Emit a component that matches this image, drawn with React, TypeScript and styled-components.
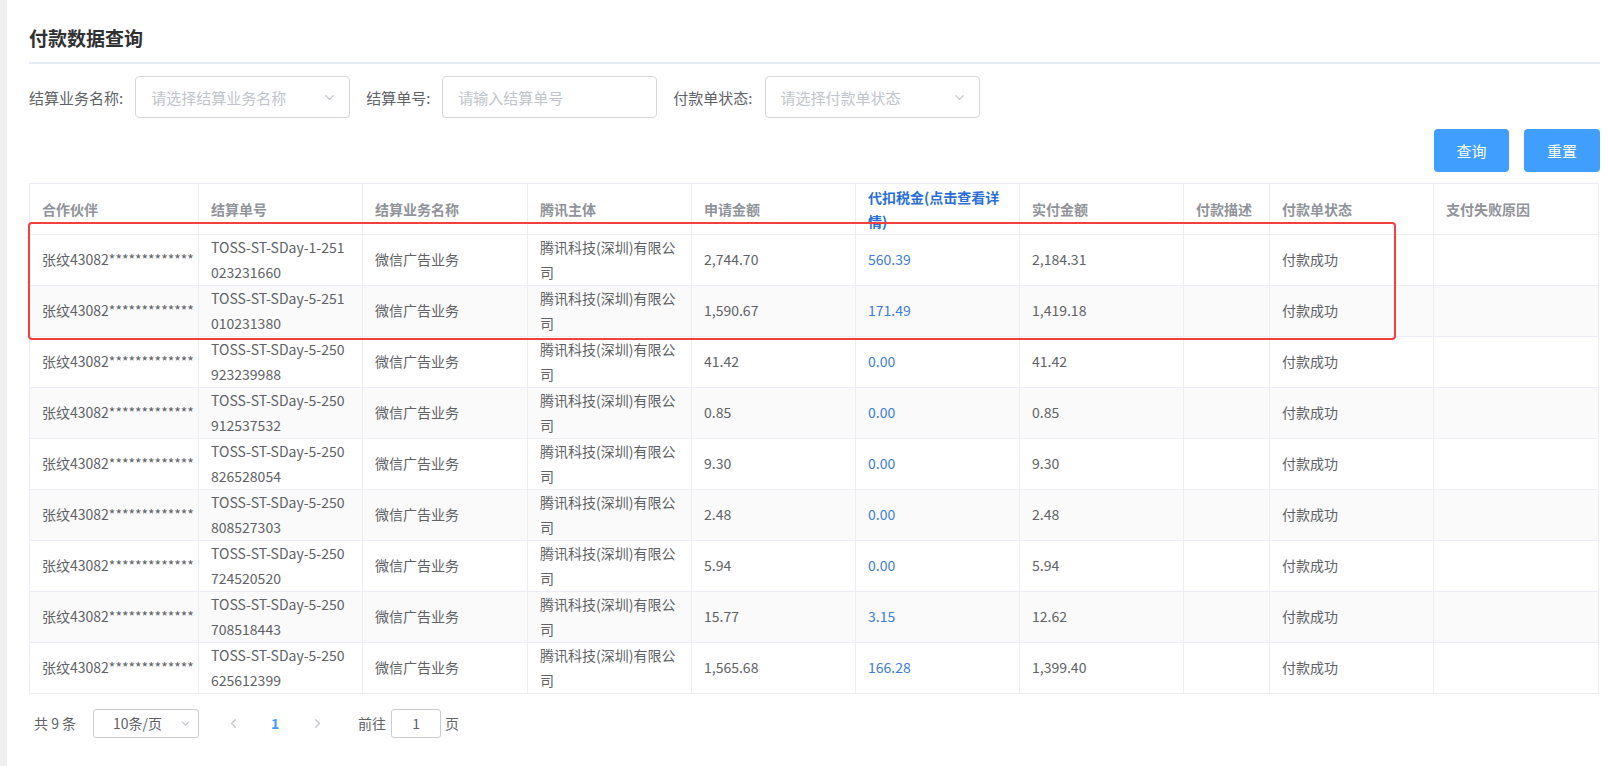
import React from 'react';
import styled, {createGlobalStyle} from 'styled-components';
import {ChevronDown, ChevronLeft, ChevronRight} from 'lucide-react';

const GlobalStyle = createGlobalStyle`
  body {
    margin: 0;
    background: #fff;
    font-family: "Noto Sans CJK SC", "Noto Sans", sans-serif;
  }
`;

const Page = styled.div`
  display: flex;
  min-height: 100vh;
`;

const SideStrip = styled.div`
  width: 7px;
  flex-shrink: 0;
  background: #efefef;
`;

const Main = styled.div`
  flex: 1;
  padding: 25px 8px 0 22px;
  min-width: 0;
`;

const Title = styled.h2`
  margin: 0;
  height: 26px;
  line-height: 26px;
  font-size: 19px;
  font-weight: 700;
  color: #303133;
`;

const Divider = styled.div`
  margin-top: 11px;
  height: 2px;
  background: #e4edf7;
`;

const FilterRow = styled.div`
  margin-top: 12px;
  height: 42px;
  display: flex;
  align-items: center;
`;

const FormItem = styled.div`
  display: flex;
  align-items: center;
  margin-right: 16px;
`;

const Label = styled.span`
  font-size: 15px;
  color: #606266;
  margin-right: 12px;
  white-space: nowrap;
`;

const Control = styled.div`
  width: 215px;
  height: 42px;
  box-sizing: border-box;
  border: 1px solid #d4d7de;
  border-radius: 4px;
  padding: 0 12px 0 15px;
  display: flex;
  align-items: center;
  justify-content: space-between;
  font-size: 15px;
  color: #c0c4cc;
`;

const ButtonRow = styled.div`
  margin-top: 11px;
  display: flex;
  justify-content: flex-end;
  gap: 15px;
`;

const Button = styled.button<{$w: number}>`
  width: ${p => p.$w}px;
  height: 43px;
  border: none;
  border-radius: 4px;
  background: #409eff;
  color: #fff;
  font-family: inherit;
  font-size: 15px;
`;

const TableWrap = styled.div`
  position: relative;
  margin-top: 11px;
`;

const Table = styled.table`
  width: 1569px;
  table-layout: fixed;
  border-collapse: collapse;
`;

const Th = styled.th<{$link?: boolean}>`
  height: 49.5px;
  padding: 0 12px;
  border: 1px solid #ebeef5;
  text-align: left;
  vertical-align: middle;
  font-size: 14px;
  line-height: 24px;
  font-weight: 700;
  color: ${p => (p.$link ? '#2a6fd6' : '#909399')};
  word-break: break-all;
`;

const Row = styled.tr<{$striped: boolean}>`
  background: ${p => (p.$striped ? '#fafafa' : '#fff')};
`;

const Td = styled.td<{$link?: boolean; $nowrap?: boolean}>`
  height: 49.8px;
  padding: 0 12px;
  border: 1px solid #ebeef5;
  vertical-align: middle;
  font-size: 14px;
  line-height: 25px;
  color: ${p => (p.$link ? '#3d7ddb' : '#606266')};
  word-break: break-all;
  white-space: ${p => (p.$nowrap ? 'nowrap' : 'normal')};
  overflow: hidden;
`;

const Highlight = styled.div`
  position: absolute;
  top: 39px;
  left: -1px;
  width: 1368px;
  height: 118px;
  box-sizing: border-box;
  border: 2px solid #f43f3f;
  border-radius: 4px;
  pointer-events: none;
`;

const Pagination = styled.div`
  margin-top: 15px;
  height: 29px;
  display: flex;
  align-items: center;
  font-size: 14px;
  color: #606266;
`;

const Total = styled.span`
  margin-left: 5px;
  margin-right: 17px;
  white-space: pre;
`;

const SizeSelect = styled.div`
  width: 106px;
  height: 29px;
  box-sizing: border-box;
  border: 1px solid #c9ccd3;
  border-radius: 3px;
  padding: 0 6px 0 19px;
  display: flex;
  align-items: center;
  justify-content: space-between;
  color: #606266;
`;

const PagerBtn = styled.div<{$active?: boolean}>`
  width: 42px;
  height: 29px;
  display: flex;
  align-items: center;
  justify-content: center;
  color: ${p => (p.$active ? '#409eff' : '#c0c4cc')};
  font-weight: ${p => (p.$active ? 700 : 400)};
`;

const Pager = styled.div`
  display: flex;
  margin-left: 13px;
`;

const Jump = styled.span`
  margin-left: 20px;
`;

const JumpInput = styled.div`
  width: 50px;
  height: 29px;
  box-sizing: border-box;
  margin: 0 4px 0 5px;
  border: 1px solid #c9ccd3;
  border-radius: 3px;
  display: flex;
  align-items: center;
  justify-content: center;
  color: #606266;
`;

const columns = [
  {title: '合作伙伴', width: 169},
  {title: '结算单号', width: 164},
  {title: '结算业务名称', width: 165},
  {title: '腾讯主体', width: 164},
  {title: '申请金额', width: 164},
  {title: '代扣税金(点击查看详情)', width: 164, link: true},
  {title: '实付金额', width: 164},
  {title: '付款描述', width: 86},
  {title: '付款单状态', width: 164},
  {title: '支付失败原因', width: 165},
];

const rows = [
  {no: 'TOSS-ST-SDay-1-251023231660', apply: '2,744.70', tax: '560.39', paid: '2,184.31'},
  {no: 'TOSS-ST-SDay-5-251010231380', apply: '1,590.67', tax: '171.49', paid: '1,419.18'},
  {no: 'TOSS-ST-SDay-5-250923239988', apply: '41.42', tax: '0.00', paid: '41.42'},
  {no: 'TOSS-ST-SDay-5-250912537532', apply: '0.85', tax: '0.00', paid: '0.85'},
  {no: 'TOSS-ST-SDay-5-250826528054', apply: '9.30', tax: '0.00', paid: '9.30'},
  {no: 'TOSS-ST-SDay-5-250808527303', apply: '2.48', tax: '0.00', paid: '2.48'},
  {no: 'TOSS-ST-SDay-5-250724520520', apply: '5.94', tax: '0.00', paid: '5.94'},
  {no: 'TOSS-ST-SDay-5-250708518443', apply: '15.77', tax: '3.15', paid: '12.62'},
  {no: 'TOSS-ST-SDay-5-250625612399', apply: '1,565.68', tax: '166.28', paid: '1,399.40'},
];

const App: React.FC = () => {
  return (
    <Page>
      <GlobalStyle/>
      <SideStrip/>
      <Main>
        <Title>付款数据查询</Title>
        <Divider/>
        <FilterRow>
          <FormItem>
            <Label>结算业务名称:</Label>
            <Control>
              请选择结算业务名称
              <ChevronDown size={15} color="#c0c4cc"/>
            </Control>
          </FormItem>
          <FormItem>
            <Label>结算单号:</Label>
            <Control>请输入结算单号</Control>
          </FormItem>
          <FormItem>
            <Label>付款单状态:</Label>
            <Control>
              请选择付款单状态
              <ChevronDown size={15} color="#c0c4cc"/>
            </Control>
          </FormItem>
        </FilterRow>
        <ButtonRow>
          <Button $w={75}>查询</Button>
          <Button $w={76}>重置</Button>
        </ButtonRow>
        <TableWrap>
          <Table>
            <colgroup>
              {columns.map(c => (
                <col key={c.title} style={{width: c.width}}/>
              ))}
            </colgroup>
            <thead>
              <tr>
                {columns.map(c => (
                  <Th key={c.title} $link={c.link}>{c.title}</Th>
                ))}
              </tr>
            </thead>
            <tbody>
              {rows.map((r, i) => (
                <Row key={r.no} $striped={i % 2 === 1}>
                  <Td $nowrap>张纹43082*************</Td>
                  <Td>
                    {r.no.slice(0, 18)}
                    <br/>
                    {r.no.slice(18)}
                  </Td>
                  <Td>微信广告业务</Td>
                  <Td>腾讯科技(深圳)有限公司</Td>
                  <Td>{r.apply}</Td>
                  <Td $link>{r.tax}</Td>
                  <Td>{r.paid}</Td>
                  <Td/>
                  <Td>付款成功</Td>
                  <Td/>
                </Row>
              ))}
            </tbody>
          </Table>
          <Highlight/>
        </TableWrap>
        <Pagination>
          <Total>共 9 条</Total>
          <SizeSelect>
            10条/页
            <ChevronDown size={13} color="#c0c4cc"/>
          </SizeSelect>
          <Pager>
            <PagerBtn><ChevronLeft size={15}/></PagerBtn>
            <PagerBtn $active>1</PagerBtn>
            <PagerBtn><ChevronRight size={15}/></PagerBtn>
          </Pager>
          <Jump>前往</Jump>
          <JumpInput>1</JumpInput>
          <span>页</span>
        </Pagination>
      </Main>
    </Page>
  );
};

export default App;
